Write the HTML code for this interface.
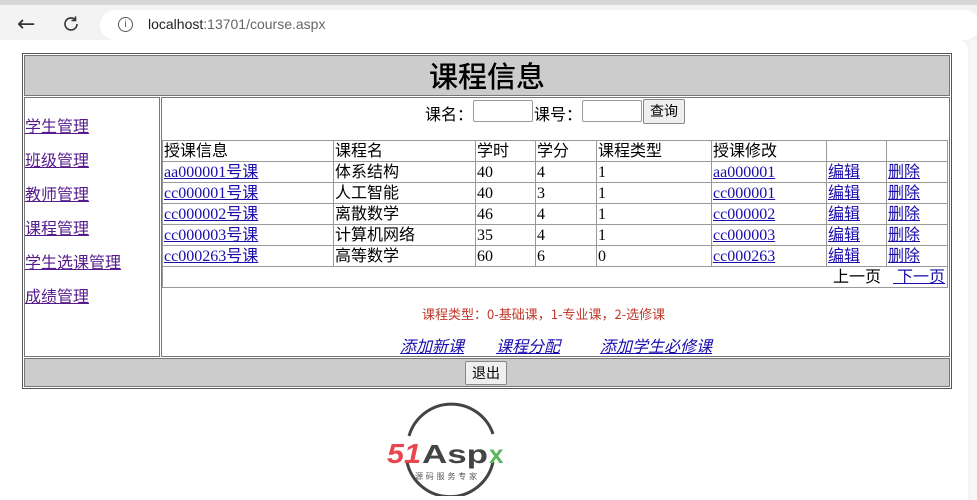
<!DOCTYPE html>
<html><head><meta charset="utf-8"><style>
*{margin:0;padding:0;box-sizing:border-box}
body{width:977px;height:500px;overflow:hidden;background:#f3f3f3;font-family:"Liberation Serif","Noto Serif CJK SC",serif;font-size:16px;color:#000;position:relative}
.a{position:absolute}
a{color:#1a0dab;text-decoration:underline}
.page{left:0;top:40px;width:968px;height:460px;background:#fff;border-top-right-radius:10px}
.side{left:970px;top:40px;width:7px;height:460px;background:#f7f7f7}
.cell{border:1px solid #777}
table.d{position:absolute;left:162px;top:140px;width:786px;border-collapse:collapse;font-family:"Liberation Serif","Noto Sans CJK SC",sans-serif}
table.d td{border:1px solid #999;height:21px;padding:0 1px;line-height:19px;font-size:16px;vertical-align:middle;white-space:nowrap}
input{position:absolute;height:22px;border:1px solid #999;border-radius:2px;background:#fff}
.btn{position:absolute;border:1px solid #888;border-radius:2px;background:#efefef;font-family:"Noto Sans CJK SC",sans-serif;font-size:14px;text-align:center}
.nav a{position:absolute;left:25px;color:#551a8b;font-family:"Noto Sans CJK SC",sans-serif;font-size:16px}
</style></head><body>
<div class="a" style="left:0;top:0;width:977px;height:5px;background:#d6d6d6"></div>
<div class="a" style="left:17px;top:12px;font-size:22px;color:#333;font-family:'DejaVu Sans'">&#8592;</div>
<svg class="a" style="left:62px;top:15px" width="18" height="18" viewBox="0 0 18 18"><path d="M15 9a6 6 0 1 1-2-4.5" fill="none" stroke="#333" stroke-width="1.6"/><path d="M13.5 1.5v4h-4" fill="none" stroke="#333" stroke-width="1.6"/></svg>
<div class="a" style="left:100px;top:10px;width:880px;height:30px;background:#fff;border-radius:15px"></div>
<div class="a" style="left:118px;top:17px;width:15px;height:15px;border:1.3px solid #555;border-radius:50%;font-size:10px;text-align:center;line-height:13px;color:#555;font-family:'Liberation Sans'">i</div>
<div class="a" style="left:148px;top:16px;font-family:'Liberation Sans';font-size:14px;color:#222">localhost<span style="color:#666">:13701/course.aspx</span></div>
<div class="a page"></div>
<div class="a side"></div>

<div class="a" style="left:22px;top:53px;width:930px;height:336px;border:1px solid #555"></div>
<div class="a cell" style="left:24px;top:55px;width:926px;height:41px;background:#ccc"></div>
<div class="a" style="left:24px;top:55px;width:926px;text-align:center;font-family:'Noto Sans CJK SC',sans-serif;font-size:29px;font-weight:500;line-height:40px">课程信息</div>
<div class="a cell" style="left:24px;top:97px;width:136px;height:260px"></div>
<div class="a cell" style="left:161px;top:97px;width:789px;height:260px"></div>
<div class="nav">
<a style="top:113px">学生管理</a><a style="top:147px">班级管理</a><a style="top:181px">教师管理</a><a style="top:215px">课程管理</a><a style="top:249px">学生选课管理</a><a style="top:283px">成绩管理</a>
</div>
<div class="a" style="left:425px;top:101px;font-family:'Noto Sans CJK SC',sans-serif">课名：</div>
<input style="left:473px;top:100px;width:60px">
<div class="a" style="left:534px;top:101px;font-family:'Noto Sans CJK SC',sans-serif">课号：</div>
<input style="left:582px;top:100px;width:60px">
<div class="btn" style="left:643px;top:99px;width:42px;height:25px;line-height:23px">查询</div>

<table class="d">
<tr><td style="width:171px">授课信息</td><td style="width:142px">课程名</td><td style="width:60px">学时</td><td style="width:61px">学分</td><td style="width:115px">课程类型</td><td style="width:115px">授课修改</td><td style="width:60px"></td><td></td></tr>
<tr><td><a>aa000001号课</a></td><td>体系结构</td><td>40</td><td>4</td><td>1</td><td><a>aa000001</a></td><td><a>编辑</a></td><td><a>删除</a></td></tr>
<tr><td><a>cc000001号课</a></td><td>人工智能</td><td>40</td><td>3</td><td>1</td><td><a>cc000001</a></td><td><a>编辑</a></td><td><a>删除</a></td></tr>
<tr><td><a>cc000002号课</a></td><td>离散数学</td><td>46</td><td>4</td><td>1</td><td><a>cc000002</a></td><td><a>编辑</a></td><td><a>删除</a></td></tr>
<tr><td><a>cc000003号课</a></td><td>计算机网络</td><td>35</td><td>4</td><td>1</td><td><a>cc000003</a></td><td><a>编辑</a></td><td><a>删除</a></td></tr>
<tr><td><a>cc000263号课</a></td><td>高等数学</td><td>60</td><td>6</td><td>0</td><td><a>cc000263</a></td><td><a>编辑</a></td><td><a>删除</a></td></tr>
<tr><td colspan="8" style="text-align:right;padding-right:2px">上一页&nbsp;&nbsp;&nbsp;<a>&nbsp;下一页</a></td></tr>
</table>

<div class="a" style="left:422px;top:304px;font-size:13px;color:#c0392b;font-family:'Noto Sans CJK SC',sans-serif">课程类型：0-基础课，1-专业课，2-选修课</div>
<div class="a" style="left:400px;top:333px;font-style:italic;font-family:'Noto Sans CJK SC',sans-serif"><a>添加新课</a></div>
<div class="a" style="left:496px;top:333px;font-style:italic;font-family:'Noto Sans CJK SC',sans-serif"><a>课程分配</a></div>
<div class="a" style="left:600px;top:333px;font-style:italic;font-family:'Noto Sans CJK SC',sans-serif"><a>添加学生必修课</a></div>

<div class="a cell" style="left:24px;top:358px;width:926px;height:29px;background:#ccc"></div>
<div class="btn" style="left:465px;top:361px;width:42px;height:24px;line-height:22px;font-size:14px">退出</div>

<svg class="a" style="left:385px;top:400px" width="130" height="96" viewBox="0 0 130 96">
<path d="M24 36 A44 44 0 0 1 108 34" fill="none" stroke="#444" stroke-width="3"/>
<path d="M108 62 A44 44 0 0 1 22 62" fill="none" stroke="#444" stroke-width="3"/>
<text x="2" y="63" font-family="Liberation Sans" font-weight="bold" font-style="italic" font-size="28" fill="#e8474f" textLength="34" lengthAdjust="spacingAndGlyphs">51</text>
<text x="37" y="63" font-family="Liberation Sans" font-weight="bold" font-size="26" fill="#444" textLength="66" lengthAdjust="spacingAndGlyphs">Asp</text>
<text x="104" y="63" font-family="Liberation Sans" font-weight="bold" font-size="26" fill="#5cb85c">x</text>
<text x="30" y="79" font-family="Noto Sans CJK SC" font-size="8" fill="#555" textLength="62">源码服务专家</text>
</svg>
</body></html>
